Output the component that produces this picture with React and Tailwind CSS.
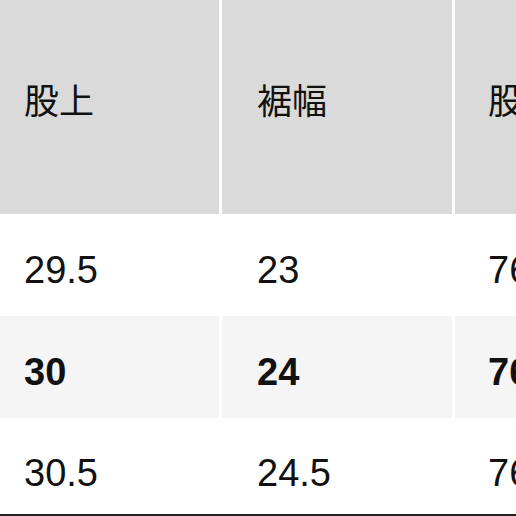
export default function App() {
  const cols = ['股上', '裾幅', '股下'];
  const rows = [
    { values: ['29.5', '23', '76'], bold: false, h: 'h-[102px]' },
    { values: ['30', '24', '76'], bold: true, h: 'h-[102px]' },
    { values: ['30.5', '24.5', '76'], bold: false, h: 'h-[96px]' },
  ];
  const pad = ['pl-[24px]', 'pl-[35px]', 'pl-[33px]'];

  return (
    <div className="w-[516px] h-[516px] overflow-hidden bg-white text-[#111]">
      <div className="grid grid-cols-[219px_230px_1fr] gap-x-[3px] w-[620px]">
        {cols.map((c, i) => (
          <div
            key={c}
            className={`h-[214px] bg-[#dadada] flex items-center pb-[16px] text-[35px] ${pad[i]}`}
            style={{ fontFamily: '"Noto Sans CJK JP", sans-serif' }}
          >
            {c}
          </div>
        ))}
        {rows.map((r, ri) =>
          r.values.map((v, i) => (
            <div
              key={ri + '-' + i}
              className={`${r.h} flex items-center text-[38px] leading-none ${pad[i]} ${
                ri === 2 ? 'pt-[14px]' : 'pt-[10px]'
              } ${r.bold ? 'bg-[#f5f5f5] font-bold' : 'bg-white'}`}
              style={{ fontFamily: '"Liberation Sans", Arial, sans-serif' }}
            >
              {v}
            </div>
          ))
        )}
      </div>
      <div className="h-[2px] bg-[#222]"></div>
    </div>
  );
}
